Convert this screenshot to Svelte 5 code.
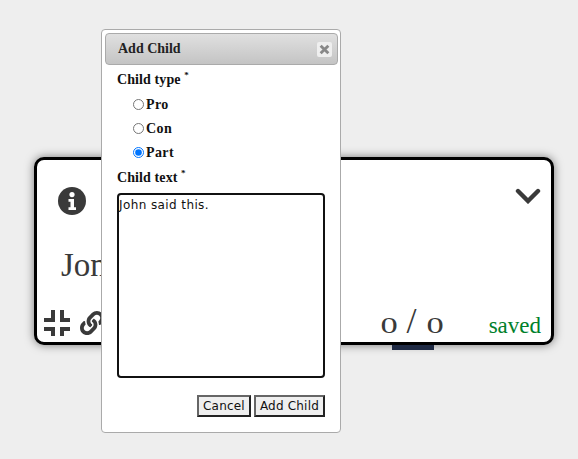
<script>
  let kind = $state('Part');
  const kinds = ['Pro', 'Con', 'Part'];
</script>

<div class="page">
  <section class="card">
    <div class="top">
      <svg class="info" viewBox="0 0 28 28" aria-hidden="true">
        <circle cx="14" cy="14" r="14" fill="#3a3a3a" />
        <circle cx="14" cy="7.6" r="2.6" fill="#fff" />
        <path d="M10.5 12h5.5v8.2h2V23h-7.5v-2.8h2v-5.4h-2z" fill="#fff" />
      </svg>
      <svg class="chev" viewBox="0 0 26 16" aria-hidden="true">
        <path d="M3 3l10 10L23 3" fill="none" stroke="#3a3a3a" stroke-width="4.4" stroke-linecap="round" />
      </svg>
    </div>
    <div class="name">Jon</div>
    <div class="bottom">
      <svg class="compress" viewBox="0 0 26 26" aria-hidden="true">
        <path d="M7 0h4v12H0V8h7zM16 0h4v8h6v4H16zM0 17h11v9H7v-5H0zM16 17h10v4h-6v5h-4z" fill="#3a3a3a" />
      </svg>
      <svg class="link" viewBox="0 0 512 512" aria-hidden="true">
        <path fill="#3a3a3a" d="M326.612 185.391c59.747 59.809 58.927 155.698.36 214.59-.11.12-.24.25-.36.37l-67.2 67.2c-59.27 59.27-155.699 59.262-214.96 0-59.27-59.26-59.27-155.7 0-214.96l37.106-37.106c9.84-9.84 26.786-3.3 27.294 10.606.648 17.722 3.826 35.527 9.69 52.721 1.986 5.822.567 12.262-3.783 16.612l-13.087 13.087c-28.026 28.026-28.905 73.66-1.155 101.96 28.024 28.579 74.086 28.749 102.325.51l67.2-67.19c28.191-28.191 28.073-73.757 0-101.83-3.701-3.694-7.429-6.564-10.341-8.569a16.037 16.037 0 0 1-6.947-12.606c-.396-10.567 3.348-21.456 11.698-29.806l21.054-21.055c5.521-5.521 14.182-6.199 20.584-1.731a152.482 152.482 0 0 1 20.522 17.197zM467.547 44.449c-59.261-59.262-155.69-59.27-214.96 0l-67.2 67.2c-.12.12-.25.25-.36.37-58.566 58.892-59.387 154.781.36 214.59a152.454 152.454 0 0 0 20.521 17.196c6.402 4.468 15.064 3.789 20.584-1.731l21.054-21.055c8.35-8.35 12.094-19.239 11.698-29.806a16.037 16.037 0 0 0-6.947-12.606c-2.912-2.005-6.64-4.875-10.341-8.569-28.073-28.073-28.191-73.639 0-101.83l67.2-67.19c28.239-28.239 74.3-28.069 102.325.51 27.75 28.3 26.872 73.934-1.155 101.96l-13.087 13.087c-4.35 4.35-5.769 10.79-3.783 16.612 5.864 17.194 9.042 34.999 9.69 52.721.509 13.906 17.454 20.446 27.294 10.606l37.106-37.106c59.271-59.259 59.271-155.699.001-214.959z" />
      </svg>
      <div class="count"><span class="digit">0</span><span class="slash">/</span><span class="digit">0</span></div>
      <div class="saved">saved</div>
    </div>
  </section>
  <div class="tab"></div>

  <div class="dialog">
    <header class="title">
      <span>Add Child</span>
      <button class="close" aria-label="Close">
        <svg viewBox="0 0 10 10"><path d="M1.5 1.5l7 7M8.5 1.5l-7 7" stroke="#888" stroke-width="2.6" /></svg>
      </button>
    </header>
    <div class="body">
      <div class="label">Child type <sup>*</sup></div>
      <div class="radios">
        {#each kinds as k}
          <label class="radio"><input type="radio" name="kind" value={k} bind:group={kind} /><span>{k}</span></label>
        {/each}
      </div>
      <div class="label text">Child text <sup>*</sup></div>
      <textarea class="area">John said this.</textarea>
      <div class="actions">
        <button class="btn">Cancel</button>
        <button class="btn">Add Child</button>
      </div>
    </div>
  </div>
</div>

<style>
  :global(body) { margin: 0; background: #eee; }
  .page { position: relative; width: 578px; height: 459px; padding-top: 157px; box-sizing: border-box; overflow: hidden; font-family: "Liberation Serif", serif; }
  .card { margin-left: 34px; width: 520px; height: 188px; box-sizing: border-box; background: #fff; border: 3px solid #000; border-radius: 10px; box-shadow: 0 0 10px rgba(0,0,0,.5); display: flex; flex-direction: column; padding: 0 10px 0 7px; color: #3a3a3a; }
  .top { display: flex; justify-content: space-between; align-items: flex-start; padding-left: 14px; height: 56px; flex: none; }
  .info { width: 28px; height: 28px; margin-top: 27px; }
  .chev { width: 26px; height: 16px; margin-top: 28px; margin-right: 0; }
  .name { font-size: 33px; line-height: 36px; padding: 31px 0 0 17px; white-space: nowrap; flex: 1; }
  .bottom { display: flex; align-items: center; height: 36px; padding-bottom: 2px; }
  .compress { width: 26px; height: 26px; margin-top: 2px; }
  .link { width: 24px; height: 24px; margin: 2px 0 0 10px; }
  .count { margin-left: auto; margin-right: 46px; display: flex; align-items: baseline; gap: 10px; font-size: 23px; }
  .digit { display: inline-block; width: 16px; text-align: center; transform: scaleX(1.5); }
  .slash { font-size: 36px; line-height: 30px; }
  .saved { color: #00802b; font-size: 23px; margin-top: 8px; }
  .tab { margin-left: 392px; width: 42px; height: 5px; background: #1f2a44; }

  .dialog { position: absolute; left: 101px; top: 29px; width: 240px; height: 404px; box-sizing: border-box; background: #fff; border: 1px solid #aaa; border-radius: 4px; padding: 3px 2px 3px 3px; color: #111; }
  .title { height: 32px; box-sizing: border-box; display: flex; align-items: center; justify-content: space-between; padding: 0 5px 0 12px; background: linear-gradient(#e0e0e0, #c4c4c4); border: 1px solid #aaa; border-radius: 4px; font-weight: bold; font-size: 14px; color: #222; }
  .close { width: 15px; height: 15px; padding: 2px; border: 0; background: #efefef; border-radius: 2px; display: flex; }
  .close svg { width: 11px; height: 11px; }
  .body { padding: 0 12px; }
  .label { font-weight: bold; font-size: 14px; letter-spacing: .1px; margin-top: 6px; line-height: 18px; }
  .label sup { font-size: 9px; line-height: 0; }
  .label.text { margin-top: 4px; }
  .radios { display: flex; flex-direction: column; padding: 4px 0 0 16px; }
  .radio { display: flex; align-items: center; height: 24px; font-weight: bold; font-size: 14px; letter-spacing: .4px; }
  .radio input { margin: -1px 2px 0 0; width: 11px; height: 11px; }
  .area { display: block; width: 208px; height: 185px; box-sizing: border-box; margin-top: 6px; border: 2px solid #111; border-radius: 4px; padding: 3px 0 0; font-family: "DejaVu Sans", sans-serif; font-size: 12px; letter-spacing: .4px; line-height: 15px; resize: none; outline: none; overflow: hidden; color: #111; }
  .actions { display: flex; justify-content: flex-end; gap: 3px; margin: 17px 1px 0 0; }
  .btn { height: 22px; padding: 0 4px; background: #efefef; border: 2px solid; border-color: #666 #222 #222 #666; font-family: "DejaVu Sans", sans-serif; font-size: 12px; letter-spacing: .2px; color: #111; }
</style>
